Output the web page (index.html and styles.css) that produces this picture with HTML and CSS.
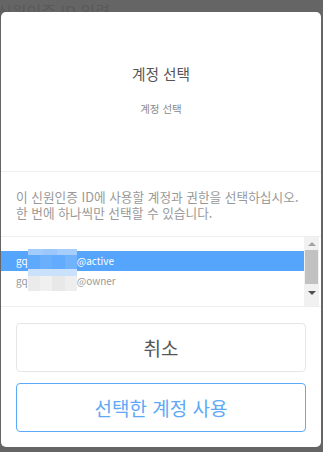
FILE: index.html
```html
<!DOCTYPE html>
<html lang="ko">
<head>
    <meta charset="UTF-8">
    <meta name="viewport" content="width=device-width, initial-scale=1.0">
    <title>계정 선택</title>
    <link rel="stylesheet" href="styles.css">
</head>
<body>
    <p class="bg-title">신원인증 ID 입력</p>

    <div class="modal">
        <div class="modal-head">
            <p class="modal-title">계정 선택</p>
            <p class="modal-sub">계정 선택</p>
        </div>

        <div class="modal-desc">
            <p>이 신원인증 ID에 사용할 계정과 권한을 선택하십시오.</p>
            <p>한 번에 하나씩만 선택할 수 있습니다.</p>
        </div>

        <div class="account-list">
            <div class="rows">
                <div class="row selected">gq<span class="mosaic"></span>@active</div>
                <div class="row">gq<span class="mosaic"></span>@owner</div>
                <span class="mosaic-block">
                    <i class="m1"></i><i class="m2"></i><i class="m3"></i><i class="m4"></i>
                </span>
            </div>
            <div class="scrollbar">
                <span class="arrow up"></span>
                <span class="thumb"></span>
                <span class="arrow down"></span>
            </div>
        </div>

        <div class="buttons">
            <button class="btn">취소</button>
            <button class="btn primary">선택한 계정 사용</button>
        </div>
    </div>
</body>
</html>
```

FILE: styles.css
```css
* {
    box-sizing: border-box;
}
body {
    margin: 0;
    height: 452px;
    background: #656565;
    font-family: "Noto Sans CJK KR", "Noto Sans", sans-serif;
    overflow: hidden;
    position: relative;
}
.bg-title {
    margin: 0;
    padding: 1px 0 0 0;
    font-size: 16px;
    line-height: 20px;
    color: #5a5a5a;
    margin-left: -3px;
}
.modal {
    position: absolute;
    top: 12px;
    left: 1px;
    width: 320px;
    height: 435px;
    background: #fff;
    border-radius: 5px;
    display: flex;
    flex-direction: column;
}
.modal-head {
    height: 160px;
    border-bottom: 1px solid #eeeeee;
    display: flex;
    flex-direction: column;
    align-items: center;
    padding-top: 52px;
}
.modal-title {
    margin: 0;
    font-size: 14.7px;
    color: #555;
    line-height: 20px;
}
.modal-sub {
    margin: 18px 0 0 0;
    font-size: 10.5px;
    color: #8a8a8a;
    line-height: 14px;
}
.modal-desc {
    height: 65px;
    padding: 17px 15px 0 15px;
    font-size: 12.7px;
    color: #999;
    border-bottom: 1px solid #eeeeee;
}
.modal-desc p {
    margin: 0;
    height: 16px;
    line-height: 16px;
}
.account-list {
    height: 70px;
    display: flex;
    border-bottom: 1px solid #eeeeee;
}
.rows {
    flex: 1;
    padding-top: 14px;
    position: relative;
}
.row {
    height: 20px;
    line-height: 20px;
    padding-left: 15px;
    font-size: 10px;
    color: #999;
    display: flex;
}
.row.selected {
    background: #55a5fd;
    color: #fff;
}
.mosaic {
    width: 49px;
}
.mosaic-block {
    position: absolute;
    left: 27px;
    top: 12px;
    width: 49px;
    display: flex;
    flex-direction: column;
}
.mosaic-block i {
    display: block;
}
.m1 {
    height: 6px;
    background: linear-gradient(90deg, #a3cbfb 0 30%, #9cc7fc 30% 60%, #a6cdfb 60%);
}
.m2 {
    height: 14px;
    background: linear-gradient(90deg, #5fa9fd 0 25%, #6aaffc 25% 50%, #63abfd 50% 75%, #70b2fb 75%);
}
.m3 {
    height: 7px;
    background: #c9e1fb;
}
.m4 {
    height: 15px;
    background: linear-gradient(90deg, #ebebeb 0 25%, #f0f0f0 25% 50%, #e8e8e8 50% 75%, #eeeeee 75%);
}
.scrollbar {
    width: 15px;
    margin-right: 2px;
    background: #f1f1f1;
    display: flex;
    flex-direction: column;
    align-items: center;
    padding: 5px 0 4px;
}
.arrow {
    width: 0;
    height: 0;
    border-left: 4px solid transparent;
    border-right: 4px solid transparent;
}
.arrow.up {
    border-bottom: 4px solid #a3a3a3;
}
.arrow.down {
    border-top: 4px solid #505050;
}
.thumb {
    width: 13px;
    height: 34px;
    margin: 4px 0 7px;
    background: #c1c1c1;
}
.buttons {
    display: flex;
    flex-direction: column;
    gap: 11px;
    padding: 16px 15px 0 15px;
}
.btn {
    height: 49px;
    background: #fff;
    border: 1px solid #e6e6e6;
    border-radius: 4px;
    font-family: "Noto Sans CJK KR", sans-serif;
    font-size: 19px;
    color: #555;
}
.btn.primary {
    border-color: #5ba9f9;
    color: #5ea8f8;
}
```
